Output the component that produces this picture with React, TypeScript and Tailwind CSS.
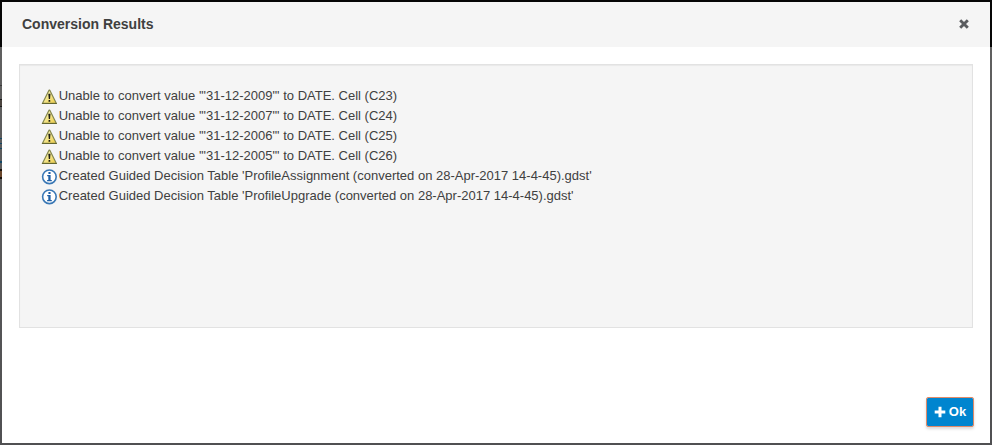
import React from "react";

type Message = { level: "warning" | "info"; text: string };

const messages: Message[] = [
  { level: "warning", text: "Unable to convert value '\"31-12-2009\"' to DATE. Cell (C23)" },
  { level: "warning", text: "Unable to convert value '\"31-12-2007\"' to DATE. Cell (C24)" },
  { level: "warning", text: "Unable to convert value '\"31-12-2006\"' to DATE. Cell (C25)" },
  { level: "warning", text: "Unable to convert value '\"31-12-2005\"' to DATE. Cell (C26)" },
  { level: "info", text: "Created Guided Decision Table 'ProfileAssignment (converted on 28-Apr-2017 14-4-45).gdst'" },
  { level: "info", text: "Created Guided Decision Table 'ProfileUpgrade (converted on 28-Apr-2017 14-4-45).gdst'" },
];

function WarningIcon() {
  return (
    <svg width="16" height="16" viewBox="0 0 16 16" className="shrink-0">
      <defs>
        <linearGradient id="warn" x1="0" y1="0" x2="1" y2="1">
          <stop offset="0.2" stopColor="#fbf7b4" />
          <stop offset="1" stopColor="#ebc943" />
        </linearGradient>
      </defs>
      <path d="M8.8 1.2 L15.4 14.4 H1.4 L8 1.2 Z" fill="url(#warn)" stroke="#85874f" strokeWidth="1.2" strokeLinejoin="round" />
      <path d="M1.4 14.5 H15.4" stroke="#65672f" strokeWidth="1.1" strokeLinecap="round" />
      <path d="M7.3 4.8 H9.5 L9 10 H7.8 Z" fill="#1c1c14" />
      <rect x="7.5" y="11" width="1.8" height="1.8" rx=".5" fill="#1c1c14" />
    </svg>
  );
}

function InfoIcon() {
  return (
    <svg width="16" height="16" viewBox="0 0 16 16" className="shrink-0">
      <circle cx="8.4" cy="7.8" r="6.8" fill="#fff" stroke="#3a78b5" strokeWidth="1.6" />
      <rect x="7.4" y="2.9" width="2.2" height="2.1" rx=".6" fill="#1f5fa5" />
      <path d="M6.2 6.1 H9.6 V11.1 H10.8 V12.3 H6.1 V11.1 H7.3 V7.2 H6.2 Z" fill="#1f5fa5" />
    </svg>
  );
}

export default function App() {
  return (
    <div className="relative h-[445px] w-[992px] overflow-hidden bg-[linear-gradient(#060606_0,#060606_47px,#606060_47px,#505052_100%)] p-0.5 font-['Liberation_Sans',Arial,sans-serif] text-[13px] leading-5 text-[#404040]">
      <div className="absolute left-0 top-[85px] h-px w-0.5 bg-[#3a3a3a]" />
      <div className="absolute left-0 top-[99px] h-2 w-0.5 border-y border-[#1b1b1b] bg-[#4a433e]" />
      <div className="absolute left-0 top-[138px] h-px w-0.5 bg-[#124766]" />
      <div className="absolute left-0 top-[143px] h-px w-0.5 bg-[#124766]" />
      <div className="absolute left-0 top-[148px] h-px w-0.5 bg-[#124766]" />
      <div className="absolute left-0 top-[161px] h-0.5 w-0.5 bg-[#124766]" />
      <div className="absolute left-0 top-[169px] h-2.5 w-0.5 border-y-2 border-[#19120c] bg-[#68452a]" />
      <div className="flex h-[441px] w-[988px] flex-col bg-white">
        <header className="flex h-[45px] shrink-0 items-center justify-between bg-[#f5f5f5] pb-[2px] pl-5 pr-5">
          <h1 className="text-[14px] font-bold leading-5">Conversion Results</h1>
          <button aria-label="Close" className="flex">
            <svg width="12" height="12" viewBox="0 0 12 12">
              <path d="M2.2 2.2 L9.8 9.8 M9.8 2.2 L2.2 9.8" stroke="#5b5d60" strokeWidth="2.9" />
            </svg>
          </button>
        </header>
        <main className="ml-[17px] mt-[17px] h-[264px] w-[954px] shrink-0 border border-[#e2e2e2] bg-[#f5f5f5] pl-[21px] pt-[21px] shadow-[inset_0_1px_1px_rgba(0,0,0,0.05)]">
          <ul>
            {messages.map((m) => (
              <li key={m.text} className="flex h-5 whitespace-pre">
                <span className="mt-[3px] flex">{m.level === "warning" ? <WarningIcon /> : <InfoIcon />}</span>
                <span className="ml-[1.7px]">{m.text}</span>
              </li>
            ))}
          </ul>
        </main>
        <footer className="mt-[69px] flex justify-end pr-4">
          <button className="flex h-[30px] w-12 items-center justify-center gap-[3px] rounded-[2px] border border-[#e08a68] bg-[#0085cf] bg-clip-padding font-bold text-white shadow-[0_2px_3px_rgba(0,0,0,0.15)]">
            <svg width="12" height="12" viewBox="0 0 12 12" className="-mt-px">
              <path d="M6 0.7 V11.3 M0.7 6 H11.3" stroke="#fff" strokeWidth="3" />
            </svg>
            <span>Ok</span>
          </button>
        </footer>
      </div>
    </div>
  );
}
